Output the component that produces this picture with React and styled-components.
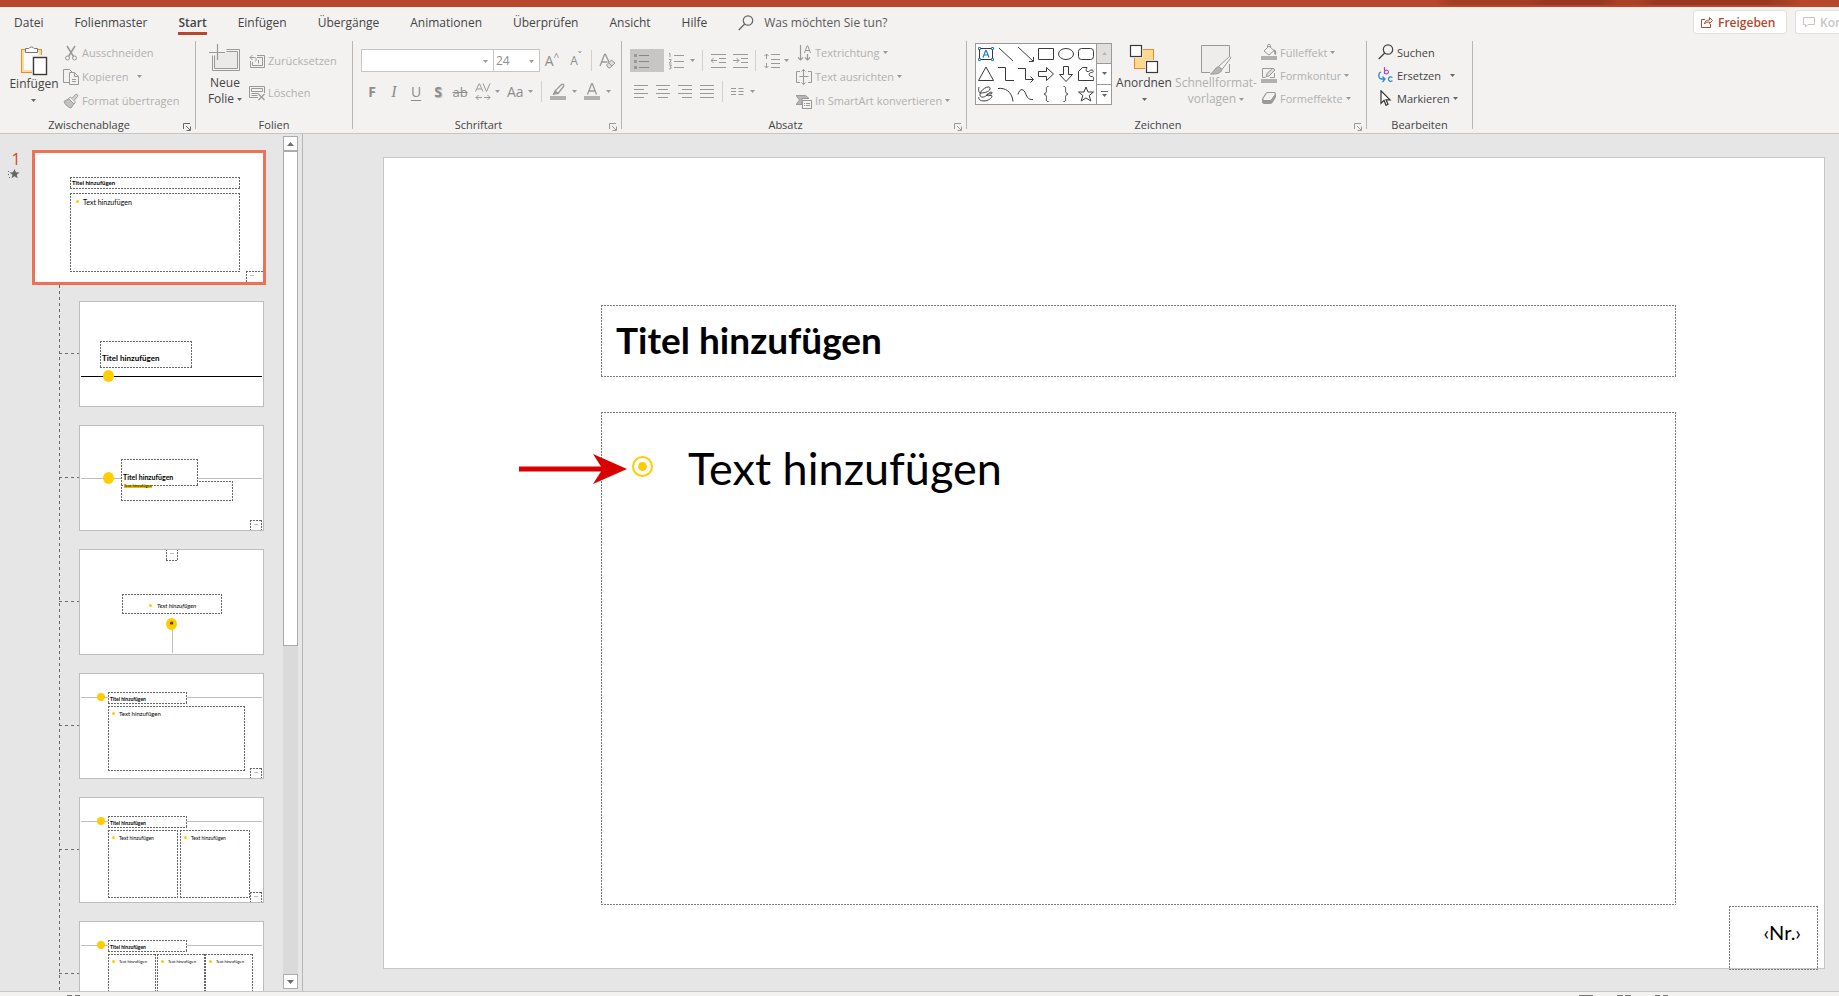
import styled, { createGlobalStyle, css } from 'styled-components';

const COLOR = {
	accent: '#b7472a',
	ribbon: '#f3f2f1',
	workspace: '#e6e6e6',
	line: '#c6c6c6',
	text: '#444444',
	disabled: '#b1b0af',
	icon: '#9b9997',
	yellow: '#ffcd00',
};

const GlobalStyle = createGlobalStyle`
	* {
		box-sizing: border-box;
	}

	body {
		margin: 0;
		overflow: hidden;
		font-family: 'Open Sans', 'Noto Sans', sans-serif;
		font-size: 12px;
		color: ${COLOR.text};
	}

	button,
	select,
	input {
		margin: 0;
		padding: 0;
		border: 0;
		background: none;
		font: inherit;
		color: inherit;
	}
`;

/* thin 2px/1px dashes along all four sides */
const dashedFrame = (color) => css`
	background-image: repeating-linear-gradient(90deg, ${color} 0 2px, transparent 2px 3px),
		repeating-linear-gradient(90deg, ${color} 0 2px, transparent 2px 3px),
		repeating-linear-gradient(180deg, ${color} 0 2px, transparent 2px 3px),
		repeating-linear-gradient(180deg, ${color} 0 2px, transparent 2px 3px);
	background-size: 100% 1px, 100% 1px, 1px 100%, 1px 100%;
	background-position: 0 0, 0 100%, 0 0, 100% 0;
	background-repeat: no-repeat;
`;

/* ---------- icons ---------- */

const Svg = ({ w = 16, h = 16, color = COLOR.icon, children }) => (
	<svg
		width={w}
		height={h}
		viewBox={`0 0 ${w} ${h}`}
		fill="none"
		stroke={color}
		style={{ display: 'block', flex: 'none' }}
		aria-hidden="true"
	>
		{children}
	</svg>
);

const Caret = ({ color = COLOR.icon }) => (
	<Svg w={5} h={3} color="none">
		<path d="M0 0h5L2.5 3z" fill={color} />
	</Svg>
);

const PasteIcon = () => (
	<Svg w={30} h={32} color="#444">
		<rect x="2.5" y="5.5" width="20" height="23" fill="#fcdc9c" stroke="#ee8a2c" />
		<rect x="5" y="8" width="15" height="18" fill="#fbfbfb" stroke="none" />
		<path d="M6.5 8.5v-4h3.4a3 3 0 0 1 5.2 0h3.4v4z" fill="#fff" stroke="#777" />
		<rect x="13" y="11" width="17" height="21" fill={COLOR.ribbon} stroke="none" />
		<rect x="14.5" y="13.5" width="13" height="17" fill="#fff" stroke="#3b3a39" strokeWidth="1.4" />
	</Svg>
);

const CutIcon = () => (
	<Svg>
		<path d="M4 1l6.5 10.5M12 1L5.500 11.500" strokeWidth="1.500" />
		<circle cx="4.500" cy="13" r="2" />
		<circle cx="11.500" cy="13" r="2" />
	</Svg>
);

const CopyIcon = () => (
	<Svg>
		<path d="M6 13.500H.5v-13h6l2.500 2.500" />
		<path d="M6.500 3.500h5l4 4v8h-9z" fill={COLOR.ribbon} />
		<path d="M11.500 3.500v4h4M9 10.500h4M9 12.500h4" />
	</Svg>
);

const BrushIcon = () => (
	<Svg>
		<path d="M1 8.500l5-3 5 5-3 4.500c-2-.3-6-3-7-6.500z" fill="#c4c2c0" />
		<path d="M5.500 5.500l2-1.500 5 5-1.500 2z" fill={COLOR.ribbon} />
		<path d="M9 5.500L12.500 1.500c1-1 3 .8 2 2L11 7.500" fill="#d8d6d4" />
	</Svg>
);

const NewSlideIcon = () => (
	<Svg w={32} h={30}>
		<path d="M17.500 5.500h13v21h-27v-15" strokeWidth="1" />
		<path d="M17.500 7.500h11v17h-23v-13" fill="#eaeaea" />
		<path d="M8.500 0v16M0 8.500h16" strokeWidth="1.200" />
	</Svg>
);

const ResetIcon = () => (
	<Svg>
		<path d="M8 2.500h7.500v12h-14V8M8 4.500h5.500v8h-10V9" />
		<path d="M1 4.500h4.500c2 0 2.500 3 .5 4M3.500 2L1 4.500 3.500 7M9.500 7v3.500" />
	</Svg>
);

const DeleteIcon = () => (
	<Svg>
		<path d="M9 12.500H.5v-11h15V8M2.500 3.500h11v3h-11zM2.500 8.500h7M2.500 10.500h6" />
		<path d="M9.500 9l6 6M15.500 9l-6 6" strokeWidth="1.200" />
	</Svg>
);

const ClearFormatIcon = () => (
	<Svg w={17}>
		<path d="M1 13L5.500 1.500h1L10 9M3 9h5.500" strokeWidth="1.300" />
		<path d="M7.500 12l5-5 3.500 3-5 5h-1.500z" fill="#dedcda" />
		<path d="M9.500 9.500l3.500 3.500" />
	</Svg>
);

const SpacingIcon = () => (
	<Svg h={18}>
		<path d="M.5 8.500L4 .8h.5L8 8.500M2 6h4.500M8 .5l3.500 8 3.500-8" />
		<path d="M1 14.500h6M9 14.500h6M3.500 12L1 14.500 3.500 17M12.500 12l2.500 2.500-2.500 2.500" />
	</Svg>
);

const HighlightIcon = () => (
	<Svg h={17}>
		<path d="M5 8l6.500-6.500c1.500-1 3 .5 2 2L8 10.500z" strokeWidth="1.300" />
		<path d="M5 8l-2 3.500L8 10.500z" fill={COLOR.icon} />
		<rect y="13" width="16" height="4" fill={COLOR.disabled} stroke="none" />
	</Svg>
);

const FontColorIcon = () => (
	<Svg h={17}>
		<path d="M3.500 11.500L7.500 1h1l4 10.500M5 8h6" strokeWidth="1.300" />
		<rect y="13" width="16" height="4" fill={COLOR.disabled} stroke="none" />
	</Svg>
);

const BulletsIcon = () => (
	<Svg>
		<path d="M0 2.500h3M0 8.500h3M0 14.500h3" strokeWidth="3" />
		<path d="M5 2.500h10M5 8.500h10M5 14.500h10" stroke="#8a8886" />
	</Svg>
);

const NumberingIcon = () => (
	<Svg h={18}>
		<path d="M1 1.500h1V5M1 7.500h2v1.500L1 11h2.500M1 13h2.500l-1.500 2c2 0 2 2-1 2" />
		<path d="M6 3.500h10M6 9.500h10M6 15.500h10" />
	</Svg>
);

const IndentIcon = ({ right }) => (
	<Svg w={15}>
		<path d="M0 1.500h15M8 5.500h7M8 9.500h7M0 14.500h15" />
		<path d={right ? 'M0 7.500h6M3.500 5L6 7.500 3.500 10' : 'M6 7.500H0M2.500 5L0 7.500 2.500 10'} />
	</Svg>
);

const LineSpacingIcon = () => (
	<Svg>
		<path d="M2.500 1v5M.5 3l2-2 2 2M2.500 15v-5M.5 13l2 2 2-2M7 1.500h9M7 6.500h9M7 10.500h9M7 14.500h9" />
	</Svg>
);

const ALIGN_PATH = {
	left: 'M0 1.500h14M0 5.500h10M0 9.500h14M0 13.500h10',
	center: 'M0 1.500h14M2 5.500h10M0 9.500h14M2 13.500h10',
	right: 'M0 1.500h14M4 5.500h10M0 9.500h14M4 13.500h10',
	justify: 'M0 1.500h14M0 5.500h14M0 9.500h14M0 13.500h14',
};

const AlignIcon = ({ kind }) => (
	<Svg w={14}>
		<path d={ALIGN_PATH[kind]} />
	</Svg>
);

const ColumnsIcon = () => (
	<Svg w={13} h={8}>
		<path d="M0 .5h5M0 3.500h5M0 6.500h5M7.500 .5h5M7.500 3.500h5M7.500 6.500h5" />
	</Svg>
);

const TextDirectionIcon = () => (
	<Svg>
		<path d="M4.500 0v15M2 12.500L4.500 15 7 12.500M11.500 9v6M9 12.500l2.500 2.500 2.500-2.500" strokeWidth="1.200" />
		<path d="M8.500 8L11 .8h.8L14.500 8M9.500 5.500h4" />
	</Svg>
);

const TextAlignIcon = () => (
	<Svg>
		<path d="M4 2.500H.5v11H4M12 2.500h3.500v11H12M3.500 7.500h9M7.500 0v16M5.500 2.500l2-2 2 2M5.500 13.500l2 2 2-2" />
	</Svg>
);

const SmartArtIcon = () => (
	<Svg>
		<path d="M0 2.500h9.500l3.500 3H6v6H0l3.500-4.500z" fill="#b8b6b4" />
		<rect x="6.500" y="7.500" width="9" height="8" fill={COLOR.ribbon} />
		<path d="M8 10.500h1M10 10.500h4M8 12.500h1M10 12.500h4" />
	</Svg>
);

const ArrangeIcon = () => (
	<Svg w={30} h={30} color="#3b3a39">
		<rect x="5.500" y="5.500" width="19" height="19" fill="#fbd98f" stroke="#ee8a2c" />
		<path d="M0 0h14v14H0zM16 16h14v14H16z" fill={COLOR.ribbon} stroke="none" />
		<rect x="1.500" y="1.500" width="11" height="11" fill="#fff" strokeWidth="1.200" />
		<rect x="17.500" y="17.500" width="11" height="11" fill="#fff" strokeWidth="1.200" />
	</Svg>
);

const QuickStyleIcon = () => (
	<Svg w={31} h={31}>
		<path d="M9 28.500H.5V1.500h28V13M28.500 20v8.500H24" fill="#eeedec" />
		<path d="M28.500 12.500l1.500 1.200-9 11.800-3.500-3z" fill={COLOR.ribbon} />
		<path d="M17.500 22.500l3.500 3c-1 4-6 5-11.500 4.500 3.500-2 4-6 8-7.500z" fill="#b8b6b4" />
	</Svg>
);

const FillIcon = () => (
	<Svg>
		<path d="M3 7l5-5 5 4.500-5 4.500zM6.500 4V1.500c0-1.500 3-1.500 3 0V4" />
		<path d="M13 6c1.500 1.500 1.500 3 1 4.500" strokeWidth="2" />
		<rect y="12" width="16" height="4" fill={COLOR.disabled} stroke="none" />
	</Svg>
);

const OutlineIcon = () => (
	<Svg>
		<path d="M11 1.500H1.500v9h3M13.500 6v4.500H9" />
		<path d="M5 9.500L6 6.500 12 1l2 2-6 6z" fill="#dedcda" />
		<rect y="12" width="16" height="4" fill={COLOR.disabled} stroke="none" />
	</Svg>
);

const EffectsIcon = () => (
	<Svg>
		<path d="M6.500 2.500H13a1.500 1.500 0 0 1 1.300 2L11 9.500a2 2 0 0 1-1.500 1H3a1.500 1.500 0 0 1-1.200-2L5 3.500a2 2 0 0 1 1.500-1z" fill={COLOR.ribbon} strokeWidth="1.200" />
		<path d="M1.500 9.500v2.500c0 1 .7 1.500 1.500 1.500h6.500c.8 0 1.300-.5 1.700-1l3.300-5.500V4.500l-3.500 5c-.5.700-1 1-1.700 1H3c-.8 0-1.500-.4-1.500-1z" fill={COLOR.icon} />
	</Svg>
);

const SearchIcon = ({ color = '#444' }) => (
	<Svg color={color}>
		<circle cx="10" cy="5.500" r="4.700" strokeWidth="1.200" />
		<path d="M6.700 9L.7 15" strokeWidth="1.300" />
	</Svg>
);

const ReplaceIcon = () => (
	<Svg>
		<path d="M6.500 0v7M6.500 4.500c1-2 4-1.500 4 .5s-3 2.500-4 1" stroke="#b146c2" strokeWidth="1.200" />
		<path d="M14.500 10.500c-2.500-1.500-4 0-4 1.700s2 3 4 1.600" stroke="#2a8dd4" strokeWidth="1.300" />
		<path d="M3 5C0 6 0 11.500 3.500 12H7M4.500 9.500L7 12l-2.500 3" stroke="#2a8dd4" strokeWidth="1.300" />
	</Svg>
);

const PointerIcon = () => (
	<Svg color="#333">
		<path d="M3 .8v12.500l3-3 2 5 2-1-2-4.500h4z" fill="#fff" strokeWidth="1.200" />
	</Svg>
);

const ShareIcon = () => (
	<Svg w={12} h={12} color={COLOR.accent}>
		<path d="M4 3.500H.5v8h9V8" />
		<path d="M3.500 8c.5-3 2-4 5-4V1.500l3 3-3 3V6c-2 0-3.500 0-5 2z" />
	</Svg>
);

const CommentIcon = () => (
	<Svg w={12} h={11} color="#c8c6c4">
		<path d="M.5.5h11v7H5L2.500 10V7.500h-2z" />
	</Svg>
);

const LauncherIcon = ({ color = COLOR.icon }) => (
	<Svg w={8} h={8} color={color}>
		<path d="M.5 6V.5H7M3 3l4 4M7.500 3.500v4h-4" />
	</Svg>
);

const ScrollArrow = ({ down }) => (
	<Svg w={7} h={4} color="none">
		<path d={down ? 'M0 0h7L3.500 4z' : 'M0 4h7L3.500 0z'} fill="#6e6e6e" />
	</Svg>
);

const StarIcon = () => (
	<Svg w={12} h={12} color="none">
		<path
			d="M6.500 1l1.400 3.300 3.600.2-2.800 2.300 1 3.500-3.200-2-3 2 1-3.500L1.500 4.500l3.500-.2zM0 3h1v1H0zM0 6h1v1H0zM1 9h1v1H1z"
			fill="#666"
		/>
	</Svg>
);

const SHAPES = [
	[
		'Textfeld',
		<>
			<path d="M3.500 4.500h13v11h-13z" stroke="#3b3a39" />
			<path d="M2.500 3.500h2v2h-2zM15.500 3.500h2v2h-2zM2.500 14.500h2v2h-2zM15.500 14.500h2v2h-2z" fill="#fff" stroke="#1c7fc4" />
			<path d="M7 13.500L9.700 6.500h.6l2.700 7M8 11h4" stroke="#1c7fc4" strokeWidth="1.200" />
		</>,
	],
	['Linie', <path d="M3 4l14 13" />],
	['Pfeil', <path d="M2 3l15 14M17.500 13v4.500H13" />],
	['Rechteck', <path d="M2.500 4.500h15v11h-15z" />],
	['Ellipse', <ellipse cx="10" cy="10" rx="7.500" ry="5.500" />],
	['Abgerundetes Rechteck', <rect x="2.500" y="4.500" width="15" height="11" rx="3" />],
	['Dreieck', <path d="M10 3l7.500 13.500h-15z" />],
	['Verbinder', <path d="M2 3.500h7.500v13H18" />],
	['Verbinder mit Pfeil', <path d="M2 4.500h7.500v11H17M14.500 12.500l3 3-3 3" />],
	['Pfeil rechts', <path d="M2.500 7.500h8v-4l7 6.500-7 6.500v-4h-8z" />],
	['Pfeil unten', <path d="M7.500 2.500h5v8h4L10 17.500 3.500 10.500h4z" />],
	['Freiform', <path d="M6.500 3.500H11c0 1-2 3 0 4s3-2 5-1.500c2 .5 1.500 2.500-.5 2.500-3 0-3.500 4 .5 4 1.500 0 1.500.5 1.500 4h-15v-9z" />],
	['Skizze', <path d="M3 3c-1 4 0 6 2 6 4 0 10-2 9-5s-9 1-10 6c-.5 4 4 4 7 1s5-4 5-2-6 0-5 2 5-1 5 1-4 5-8 5-6-2-5-4" />],
	['Bogen', <path d="M2 4.500c7-1 14 3 15 13" />],
	['Kurve', <path d="M2 10.500c2-7 6-6 8 0 2 5 4 5 7 5" />],
	['Klammer links', <path d="M12.500 2.500c-3 0-2 2-2 4s-1 3-2.500 3.500c1.500.5 2.500 1.500 2.500 3.500s-1 4 2 4" />],
	['Klammer rechts', <path d="M7.500 2.500c3 0 2 2 2 4s1 3 2.500 3.500c-1.500.5-2.500 1.500-2.500 3.500s1 4-2 4" />],
	['Stern', <path d="M10 3l2 5h5.500l-4.300 3.500 1.600 5.500L10 14l-4.800 3 1.600-5.500L2.500 8H8z" />],
];

/* ---------- frame ---------- */

const Window = styled.div`
	display: flex;
	flex-direction: column;
	height: 100vh;
	background: ${COLOR.workspace};
	overflow: hidden;
`;

const TitleStrip = styled.div`
	flex: none;
	height: 7px;
	border-bottom: 2px solid ${COLOR.accent};
	background: linear-gradient(
		90deg,
		${COLOR.accent} 78%,
		#a33e25 79% 83%,
		#983821 84% 87%,
		#a94127 88% 89%,
		#983821 90% 96%,
		#a33e25 97%,
		${COLOR.accent} 98%
	);
`;

const TabBar = styled.nav`
	display: flex;
	flex: none;
	align-items: flex-start;
	height: 34px;
	padding: 3px 0 0 14px;
	background: ${COLOR.ribbon};
	white-space: nowrap;
`;

const Tab = styled.a`
	flex: none;
	height: 25px;
	margin-right: 31px;
	line-height: 26px;
	color: ${COLOR.text};
	text-decoration: none;
	border-bottom: 3px solid ${({ $active }) => ($active ? COLOR.accent : 'transparent')};
	font-weight: ${({ $active }) => ($active ? 600 : 400)};
`;

const TellMe = styled.label`
	display: flex;
	align-items: center;
	gap: 10px;
	height: 25px;

	& input {
		width: 160px;
		outline: 0;
	}

	& input::placeholder {
		color: #5c5a58;
		opacity: 1;
	}
`;

const ShareArea = styled.div`
	display: flex;
	gap: 8px;
	margin-left: auto;
`;

const ShareButton = styled.button`
	display: flex;
	align-items: center;
	gap: 5px;
	height: 24px;
	padding-left: 7px;
	border: 1px solid #e1dfdd;
	border-radius: 3px;
	background: #fff;
	color: ${COLOR.accent};
	font-weight: 600;
	width: 94px;

	&:disabled {
		width: 44px;
		overflow: hidden;
		border-right: 0;
		border-radius: 3px 0 0 3px;
		color: #c8c6c4;
	}
`;

/* ---------- ribbon ---------- */

const Ribbon = styled.div`
	display: flex;
	flex: none;
	height: 93px;
	background: ${COLOR.ribbon};
	border-bottom: 1px solid ${COLOR.line};
	white-space: nowrap;
`;

const GroupBox = styled.section`
	display: flex;
	flex: none;
	flex-direction: column;
	width: ${({ $width }) => $width}px;
`;

const GroupBody = styled.div`
	display: flex;
	flex: 1;
	min-height: 0;
	padding-left: 8px;
`;

const GroupFooter = styled.footer`
	display: flex;
	height: 16px;
	line-height: 15px;
	font-size: 11px;

	& span {
		flex: 1;
		text-align: center;
	}

	& button {
		width: 17px;
		padding: 4px 0 0 5px;
	}
`;

const GroupDivider = styled.div`
	flex: none;
	width: 1px;
	height: 88px;
	background: #b8b6b4;
`;

const Group = ({ title, width, launcher, launcherColor, children }) => (
	<>
		<GroupBox $width={width}>
			<GroupBody>{children}</GroupBody>
			<GroupFooter>
				<span>{title}</span>
				{launcher && (
					<button aria-label={`${title}: Optionen`}>
						<LauncherIcon color={launcherColor} />
					</button>
				)}
			</GroupFooter>
		</GroupBox>
		<GroupDivider />
	</>
);

const BigButton = styled.button`
	display: flex;
	flex: none;
	flex-direction: column;
	align-items: center;
	width: ${({ $width }) => $width}px;
	padding-top: 3px;
	line-height: 16px;
	color: ${({ $disabled }) => ($disabled ? COLOR.disabled : COLOR.text)};

	& > svg {
		margin-bottom: auto;
	}
`;

const BigLabel = styled.span`
	display: flex;
	flex-direction: column;
	align-items: center;
	height: 42px;
`;

const CaretLine = styled.span`
	display: flex;
	align-items: center;
	gap: 3px;
	height: 16px;
`;

const Stack = styled.div`
	display: flex;
	flex-direction: column;
	padding-top: ${({ $top = 0 }) => $top}px;
	margin-left: ${({ $left = 0 }) => $left}px;
`;

const SmallButton = styled.button`
	display: flex;
	align-items: center;
	gap: 3px;
	height: ${({ $height = 24 }) => $height}px;
	padding-bottom: 1px;
	font-size: 11px;
	color: ${({ $enabled }) => ($enabled ? COLOR.text : COLOR.disabled)};
`;

const Row = styled.div`
	display: flex;
	align-items: center;
	height: 23px;
	margin-top: 8px;
`;

const Tool = styled.button`
	display: flex;
	align-items: center;
	justify-content: ${({ $split }) => ($split ? 'flex-start' : 'center')};
	gap: ${({ $gap = 6 }) => $gap}px;
	width: ${({ $width = 22 }) => $width}px;
	height: 23px;
	padding-left: ${({ $split }) => ($split ? 4 : 0)}px;
	color: #8f8d8b;
	background: ${({ $pressed }) => ($pressed ? '#c8c6c4' : 'none')};
	font-size: ${({ $size = 14 }) => $size}px;
`;

const Letter = styled.span`
	${({ $kind }) => $kind === 'bold' && 'font-weight: 700;'}
	${({ $kind }) => $kind === 'italic' && "font: italic 16px 'Liberation Serif', serif;"}
	${({ $kind }) => $kind === 'underline' && 'text-decoration: underline; text-underline-offset: 3px;'}
	${({ $kind }) => $kind === 'shadow' && 'font-weight: 700; text-shadow: 1px 1px 1px #bbb;'}
	${({ $kind }) => $kind === 'strike' && 'font-size: 13px; text-decoration: line-through;'}

	& sup {
		font-size: 10px;
		line-height: 0;
		vertical-align: 5px;
	}
`;

const ToolDivider = styled.i`
	width: 1px;
	height: 21px;
	margin: 0 4px;
	background: #d2d0ce;
`;

const Combo = styled.label`
	position: relative;
	width: ${({ $width }) => $width}px;
	height: 23px;
	margin-right: -1px;
	border: 1px solid ${COLOR.line};
	background: #fff;

	& select {
		width: 100%;
		height: 100%;
		padding-left: 2px;
		appearance: none;
		color: #8f8d8b;
	}

	& svg {
		position: absolute;
		right: 5px;
		top: 10px;
		pointer-events: none;
	}
`;

const Gallery = styled.div`
	display: flex;
	width: 137px;
	height: 62px;
	margin-top: 2px;
	border: 1px solid ${COLOR.icon};
	background: #fff;
`;

const ShapeGrid = styled.div`
	display: grid;
	flex: 1;
	grid-template-columns: repeat(6, 20px);
	grid-template-rows: repeat(3, 20px);
`;

const GalleryScroll = styled.div`
	display: flex;
	flex-direction: column;
	width: 15px;

	& button {
		display: flex;
		flex: 1;
		flex-direction: column;
		align-items: center;
		justify-content: center;
		gap: 2px;
		border-left: 1px solid ${COLOR.icon};
	}

	& button + button {
		border-top: 1px solid ${COLOR.icon};
	}

	& button:disabled {
		background: #e1dfdd;
	}
`;

/* ---------- slide list ---------- */

const Workspace = styled.main`
	display: flex;
	flex: 1;
	min-height: 0;
`;

const Sidebar = styled.aside`
	display: flex;
	flex: none;
	width: 303px;
	padding: 2px 0;
	border-right: 1px solid #b5b5b5;
`;

const ThumbList = styled.div`
	flex: 1;
	margin-bottom: -2px;
	overflow: hidden;
`;

const MasterRow = styled.div`
	display: flex;
	gap: 8px;
	padding: 14px 0 0 8px;
`;

const MasterMark = styled.div`
	width: 16px;
	font-size: 16px;
	line-height: 18px;
	text-align: center;
	color: #d24726;
`;

const Thumb = styled.div`
	position: relative;
	width: ${({ $master }) => ($master ? 234 : 185)}px;
	height: ${({ $master }) => ($master ? 135 : 106)}px;
	border: ${({ $master }) => ($master ? '3px solid #f07055' : '1px solid #bdbdbd')};
	background: #fff;
	overflow: hidden;
	font-family: Lato, 'Open Sans', sans-serif;
	color: #000;
`;

const LayoutTree = styled.div`
	display: flex;
	flex-direction: column;
	gap: 18px;
	margin-left: 59px;
	padding-top: 16px;
	background: repeating-linear-gradient(180deg, #6a6a6a 0 3px, transparent 3px 6px) 0 0 / 1px 100%
		no-repeat;
`;

const LayoutRow = styled.div`
	padding-left: 20px;
	background: repeating-linear-gradient(90deg, #6a6a6a 0 3px, transparent 3px 6px) 0 52px / 20px
		1px no-repeat;
`;

const Frame = styled.div`
	position: absolute;
	left: ${({ $x }) => $x}px;
	top: ${({ $y }) => $y}px;
	width: ${({ $w }) => $w}px;
	height: ${({ $h }) => $h}px;
	background-color: #fff;
	${dashedFrame('#666')}
`;

const Caption = styled.div`
	position: absolute;
	left: ${({ $x }) => $x}px;
	top: ${({ $y }) => $y}px;
	font-size: ${({ $size }) => $size}px;
	font-weight: ${({ $bold }) => ($bold ? 700 : 400)};
	font-style: ${({ $italic }) => ($italic ? 'italic' : 'normal')};
	line-height: 8px;
	white-space: nowrap;
	background: ${({ $marked }) => ($marked ? 'linear-gradient(#e8ba00, #e8ba00) 0 3px / 100% 3px no-repeat' : 'none')};
`;

const Dot = styled.i`
	position: absolute;
	left: ${({ $x }) => $x}px;
	top: ${({ $y }) => $y}px;
	width: ${({ $w }) => $w}px;
	height: ${({ $h }) => $h}px;
	border-radius: 50%;
	background: ${COLOR.yellow};
	font: 900 9px/16px Lato, sans-serif;
	text-align: center;
`;

const Rule = styled.i`
	position: absolute;
	left: ${({ $x }) => $x}px;
	top: ${({ $y }) => $y}px;
	width: ${({ $w }) => $w}px;
	height: ${({ $h = 1 }) => $h}px;
	background: ${({ $dark }) => ($dark ? '#000' : '#bdbdbd')};
`;

const NumberFrame = ({ x, y, w = 12, h = 12 }) => (
	<>
		<Frame $x={x} $y={y} $w={w} $h={h} />
		<Rule $x={x + 4} $y={y + 4} $w={4} />
	</>
);

const BulletText = ({ x, y, size = 5 }) => (
	<>
		<Dot $x={x - 7} $y={y - 2} $w={3} $h={3} />
		<Caption $x={x} $y={y - 4} $size={size}>
			Text hinzufügen
		</Caption>
	</>
);

const ContentLayout = ({ columns, size }) => (
	<Thumb>
		<Rule $x={1} $y={23} $w={181} />
		<Dot $x={17} $y={19} $w={8} $h={8} />
		<Frame $x={28} $y={18} $w={79} $h={12} />
		<Caption $x={30} $y={21} $size={5} $bold>
			Titel hinzufügen
		</Caption>
		{columns.map(({ x, w, h }) => (
			<Frame key={x} $x={x} $y={32} $w={w} $h={h} />
		))}
		{columns.map(({ x }) => (
			<BulletText key={x} x={x + 11} y={40} size={size} />
		))}
		<NumberFrame x={170} y={94} />
	</Thumb>
);

const ScrollBar = styled.div`
	display: flex;
	flex: none;
	flex-direction: column;
	width: 15px;
	margin-right: 4px;
	background: #dadada;
`;

const ScrollButton = styled.button`
	display: flex;
	align-items: center;
	justify-content: center;
	height: 15px;
	border: 1px solid #ababab;
	background: #fff;
`;

const ScrollThumb = styled.div`
	height: 58%;
	margin-bottom: auto;
	border: 1px solid #ababab;
	background: #fff;
`;

/* ---------- slide ---------- */

const SlideArea = styled.div`
	flex: 1;
	min-width: 0;
	padding: 23px 14px 0 80px;
`;

const Slide = styled.article`
	position: relative;
	display: flex;
	flex-direction: column;
	gap: 35px;
	aspect-ratio: 1442 / 812;
	padding: 147px 148px 63px 217px;
	border: 1px solid ${COLOR.line};
	background: #fff;
	font-family: Lato, 'Open Sans', sans-serif;
	color: #000;
`;

const SlideTitle = styled.h1`
	height: 72px;
	margin: 0;
	padding-left: 15px;
	font-size: 37px;
	font-weight: 700;
	line-height: 70px;
	${dashedFrame('#7a7a7a')}
`;

const SlideBody = styled.div`
	position: relative;
	flex: 1;
	padding: 28px 0 0 31px;
	${dashedFrame('#7a7a7a')}
`;

const SlideBullet = styled.p`
	display: flex;
	align-items: center;
	gap: 35px;
	margin: 0;
	font-size: 45px;
	line-height: 56px;

	& svg {
		margin-bottom: 4px;
	}
`;

const Pointer = styled.svg`
	position: absolute;
	left: -82px;
	top: 42px;
`;

const SlideNumber = styled.div`
	position: absolute;
	right: 6px;
	bottom: -2px;
	width: 89px;
	height: 64px;
	padding-right: 17px;
	font-size: 20px;
	line-height: 52px;
	text-align: right;
	${dashedFrame('#7a7a7a')}
`;

const StatusBar = styled.footer`
	display: flex;
	flex: none;
	align-items: flex-end;
	justify-content: space-between;
	height: 5px;
	padding: 0 170px 0 67px;
	border-top: 1px solid ${COLOR.line};
	background: ${COLOR.ribbon};
`;

const TABS = [
	'Datei',
	'Folienmaster',
	'Start',
	'Einfügen',
	'Übergänge',
	'Animationen',
	'Überprüfen',
	'Ansicht',
	'Hilfe',
];

const Header = () => (
	<>
		<TitleStrip />
		<TabBar>
			{TABS.map((name) => (
				<Tab key={name} href="#" $active={name === 'Start'}>
					{name}
				</Tab>
			))}
			<TellMe>
				<SearchIcon color="#666" />
				<input aria-label="Suche" placeholder="Was möchten Sie tun?" />
			</TellMe>
			<ShareArea>
				<ShareButton>
					<ShareIcon />
					Freigeben
				</ShareButton>
				<ShareButton disabled>
					<CommentIcon />
					Kommentare
				</ShareButton>
			</ShareArea>
		</TabBar>
	</>
);

const ClipboardGroup = () => (
	<Group title="Zwischenablage" width={195} launcher launcherColor="#666">
		<BigButton $width={52}>
			<PasteIcon />
			<BigLabel>
				Einfügen
				<CaretLine>
					<Caret color="#666" />
				</CaretLine>
			</BigLabel>
		</BigButton>
		<Stack $left={3}>
			<SmallButton>
				<CutIcon />
				Ausschneiden
			</SmallButton>
			<SmallButton>
				<CopyIcon />
				<CaretLine>
					Kopieren <span>&nbsp;</span>
					<Caret />
				</CaretLine>
			</SmallButton>
			<SmallButton>
				<BrushIcon />
				Format übertragen
			</SmallButton>
		</Stack>
	</Group>
);

const SlidesGroup = () => (
	<Group title="Folien" width={156}>
		<BigButton $width={42}>
			<NewSlideIcon />
			<BigLabel>
				Neue
				<CaretLine>
					Folie
					<Caret color="#666" />
				</CaretLine>
			</BigLabel>
		</BigButton>
		<Stack $left={3} $top={4}>
			<SmallButton $height={32}>
				<ResetIcon />
				Zurücksetzen
			</SmallButton>
			<SmallButton $height={32}>
				<DeleteIcon />
				Löschen
			</SmallButton>
		</Stack>
	</Group>
);

const FontGroup = () => (
	<Group title="Schriftart" width={268} launcher>
		<Stack>
			<Row>
				<Combo $width={133}>
					<select aria-label="Schriftart">
						<option></option>
					</select>
					<Caret />
				</Combo>
				<Combo $width={47}>
					<select aria-label="Schriftgrad">
						<option>24</option>
					</select>
					<Caret />
				</Combo>
				<Tool $width={26} aria-label="Schrift vergrößern">
					<Letter>
						A<sup>^</sup>
					</Letter>
				</Tool>
				<Tool aria-label="Schrift verkleinern" $size={12}>
					<Letter>
						A<sup>ˇ</sup>
					</Letter>
				</Tool>
				<ToolDivider />
				<Tool $width={22} aria-label="Formatierung löschen">
					<ClearFormatIcon />
				</Tool>
			</Row>
			<Row>
				<Tool>
					<Letter $kind="bold">F</Letter>
				</Tool>
				<Tool>
					<Letter $kind="italic">I</Letter>
				</Tool>
				<Tool>
					<Letter $kind="underline">U</Letter>
				</Tool>
				<Tool>
					<Letter $kind="shadow">S</Letter>
				</Tool>
				<Tool>
					<Letter $kind="strike">ab</Letter>
				</Tool>
				<Tool $split $gap={4} $width={32} aria-label="Zeichenabstand">
					<SpacingIcon />
					<Caret />
				</Tool>
				<Tool $split $gap={4} $width={34}>
					Aa
					<Caret />
				</Tool>
				<ToolDivider />
				<Tool $split $width={34} aria-label="Texthervorhebung">
					<HighlightIcon />
					<Caret />
				</Tool>
				<Tool $split $width={34} aria-label="Schriftfarbe">
					<FontColorIcon />
					<Caret />
				</Tool>
			</Row>
		</Stack>
	</Group>
);

const ParagraphGroup = () => (
	<Group title="Absatz" width={344} launcher>
		<Stack>
			<Row>
				<Tool $split $pressed $width={34} aria-label="Aufzählungszeichen">
					<BulletsIcon />
				</Tool>
				<Tool $split $width={34} aria-label="Nummerierung">
					<NumberingIcon />
					<Caret />
				</Tool>
				<ToolDivider />
				<Tool $width={22} aria-label="Einzug verkleinern">
					<IndentIcon />
				</Tool>
				<Tool $width={22} aria-label="Einzug vergrößern">
					<IndentIcon right />
				</Tool>
				<ToolDivider />
				<Tool $split $gap={4} $width={34} aria-label="Zeilenabstand">
					<LineSpacingIcon />
					<Caret />
				</Tool>
			</Row>
			<Row>
				{['left', 'center', 'right', 'justify'].map((kind) => (
					<Tool key={kind} aria-label={kind}>
						<AlignIcon kind={kind} />
					</Tool>
				))}
				<ToolDivider />
				<Tool $split $width={34} aria-label="Spalten">
					<ColumnsIcon />
					<Caret />
				</Tool>
			</Row>
		</Stack>
		<Stack $left={2}>
			<SmallButton>
				<TextDirectionIcon />
				Textrichtung
				<Caret />
			</SmallButton>
			<SmallButton>
				<TextAlignIcon />
				Text ausrichten
				<Caret />
			</SmallButton>
			<SmallButton>
				<SmartArtIcon />
				In SmartArt konvertieren
				<Caret />
			</SmallButton>
		</Stack>
	</Group>
);

const DrawingGroup = () => (
	<Group title="Zeichnen" width={399} launcher>
		<Gallery>
			<ShapeGrid>
				{SHAPES.map(([name, shape]) => (
					<button key={name} aria-label={name}>
						<Svg w={20} h={20} color="#3b3a39">
							{shape}
						</Svg>
					</button>
				))}
			</ShapeGrid>
			<GalleryScroll>
				<button disabled aria-label="Nach oben">
					<Svg w={5} h={3} color="none">
						<path d="M0 3h5L2.500 0z" fill="#b8b6b4" />
					</Svg>
				</button>
				<button aria-label="Nach unten">
					<Caret color="#666" />
				</button>
				<button aria-label="Weitere Formen">
					<Svg w={7} h={6} color="none">
						<path d="M0 0h7v1H0zM1 3h5L3.500 6z" fill="#666" />
					</Svg>
				</button>
			</GalleryScroll>
		</Gallery>
		<BigButton $width={64}>
			<ArrangeIcon />
			<BigLabel>
				Anordnen
				<CaretLine>
					<Caret color="#666" />
				</CaretLine>
			</BigLabel>
		</BigButton>
		<BigButton $width={80} $disabled>
			<QuickStyleIcon />
			<BigLabel>
				Schnellformat-
				<CaretLine>
					vorlagen
					<Caret />
				</CaretLine>
			</BigLabel>
		</BigButton>
		<Stack $left={5}>
			<SmallButton $height={23}>
				<FillIcon />
				Fülleffekt
				<Caret />
			</SmallButton>
			<SmallButton $height={23}>
				<OutlineIcon />
				Formkontur
				<Caret />
			</SmallButton>
			<SmallButton $height={23}>
				<EffectsIcon />
				Formeffekte
				<Caret />
			</SmallButton>
		</Stack>
	</Group>
);

const EditingGroup = () => (
	<Group title="Bearbeiten" width={105}>
		<Stack $left={3}>
			<SmallButton $height={23} $enabled>
				<SearchIcon />
				Suchen
			</SmallButton>
			<SmallButton $height={23} $enabled>
				<ReplaceIcon />
				<CaretLine>
					Ersetzen <span>&nbsp;</span>
					<Caret color="#666" />
				</CaretLine>
			</SmallButton>
			<SmallButton $height={23} $enabled>
				<PointerIcon />
				Markieren
				<Caret color="#666" />
			</SmallButton>
		</Stack>
	</Group>
);

const SlideList = () => (
	<Sidebar>
		<ThumbList>
			<MasterRow>
				<MasterMark>
					1
					<StarIcon />
				</MasterMark>
				<Thumb $master>
					<Frame $x={35} $y={24} $w={170} $h={12} />
					<Caption $x={37} $y={26} $size={6} $bold>
						Titel hinzufügen
					</Caption>
					<Frame $x={35} $y={40} $w={170} $h={79} />
					<BulletText x={48} y={49} size={7} />
					<NumberFrame x={211} y={118} w={20} h={14} />
				</Thumb>
			</MasterRow>
			<LayoutTree>
				<LayoutRow>
					<Thumb>
						<Frame $x={20} $y={39} $w={92} $h={27} />
						<Caption $x={22} $y={52} $size={8} $bold>
							Titel hinzufügen
						</Caption>
						<Rule $x={1} $y={74} $w={181} $dark />
						<Dot $x={23} $y={68} $w={11} $h={12} />
					</Thumb>
				</LayoutRow>
				<LayoutRow>
					<Thumb>
						<Rule $x={1} $y={52} $w={181} />
						<Dot $x={23} $y={46} $w={11} $h={12} />
						<Frame $x={41} $y={55} $w={112} $h={20} />
						<Frame $x={41} $y={33} $w={77} $h={27} />
						<Caption $x={43} $y={47} $size={7} $bold>
							Titel hinzufügen
						</Caption>
						<Caption $x={44} $y={56} $size={4} $marked>
							Text hinzufügen
						</Caption>
						<NumberFrame x={170} y={94} />
					</Thumb>
				</LayoutRow>
				<LayoutRow>
					<Thumb>
						<NumberFrame x={86} y={-1} />
						<Frame $x={42} $y={44} $w={100} $h={20} />
						<Dot $x={69} $y={54} $w={3} $h={3} />
						<Caption $x={77} $y={52} $size={6} $italic>
							Text hinzufügen
						</Caption>
						<Rule $x={92} $y={79} $w={1} $h={24} />
						<Dot $x={86} $y={68} $w={11} $h={12}>
							“
						</Dot>
					</Thumb>
				</LayoutRow>
				<LayoutRow>
					<ContentLayout size={6} columns={[{ x: 28, w: 137, h: 65 }]} />
				</LayoutRow>
				<LayoutRow>
					<ContentLayout
						columns={[
							{ x: 28, w: 70, h: 68 },
							{ x: 100, w: 70, h: 68 },
						]}
					/>
				</LayoutRow>
				<LayoutRow>
					<ContentLayout
						size={4}
						columns={[
							{ x: 28, w: 48, h: 68 },
							{ x: 77, w: 48, h: 68 },
							{ x: 125, w: 48, h: 68 },
						]}
					/>
				</LayoutRow>
			</LayoutTree>
		</ThumbList>
		<ScrollBar>
			<ScrollButton aria-label="Nach oben">
				<ScrollArrow />
			</ScrollButton>
			<ScrollThumb />
			<ScrollButton aria-label="Nach unten">
				<ScrollArrow down />
			</ScrollButton>
		</ScrollBar>
	</Sidebar>
);

const SlideEditor = () => (
	<SlideArea>
		<Slide>
			<SlideTitle>Titel hinzufügen</SlideTitle>
			<SlideBody>
				<Pointer width="108" height="30" viewBox="0 0 108 30">
					<path d="M0 12.500h82L74 0l34 15-34 15 8-12.500H0z" fill="#d90000" />
				</Pointer>
				<SlideBullet>
					<Svg w={21} h={21} color={COLOR.yellow}>
						<circle cx="10.500" cy="10.500" r="9.500" strokeWidth="2" />
						<circle cx="10.500" cy="10.500" r="4.500" fill={COLOR.yellow} stroke="none" />
					</Svg>
					Text hinzufügen
				</SlideBullet>
			</SlideBody>
			<SlideNumber>‹Nr.›</SlideNumber>
		</Slide>
	</SlideArea>
);

const App = () => (
	<Window>
		<GlobalStyle />
		<Header />
		<Ribbon>
			<ClipboardGroup />
			<SlidesGroup />
			<FontGroup />
			<ParagraphGroup />
			<DrawingGroup />
			<EditingGroup />
		</Ribbon>
		<Workspace>
			<SlideList />
			<SlideEditor />
		</Workspace>
		<StatusBar>
			<Svg w={14} h={1} color="#777">
				<path d="M0 .5h5M8 .5h5" />
			</Svg>
			<Svg w={90} h={1} color="#777">
				<path d="M0 .5h14M38 .5h6M46 .5h6M76 .5h5M84 .5h5" />
			</Svg>
		</StatusBar>
	</Window>
);

export default App;
